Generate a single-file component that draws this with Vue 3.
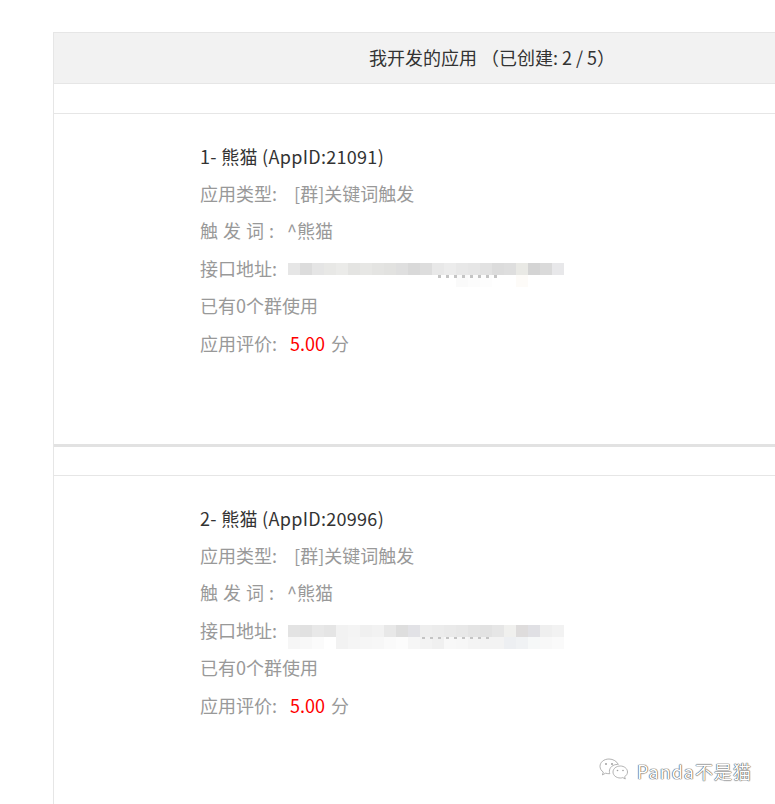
<script setup>
const top1 = ['#e6e6e6','#dcdcdc','#e5e5e5','#e8e8e6','#ebebe9','#e4e4e2','#e7e7e5','#e4e4e2','#e2e2e0','#dfdfdf','#d9d9d9','#dddddd','#e8e8e8','#ececec','#e8e8e8','#e6e6e6','#e2e2e2','#dcdcdc','#dedede','#e9e9e5','#d4d4d4','#dadada','#e8e8ea']
const bottom1 = ['#fff','#fff','#fff','#fff','#fff','#fff','#fff','#fff','#fff','#fff','#fff','#fff','#fff','#fff','#fafafa','#fcfcfc','#fdfdfd','#fff','#fff','#fdfbf8','#fff','#fff','#fff']
const top2 = ['#e3e3e3','#e1e1e1','#e8e8e8','#e5e5e5','#f2f2f2','#f4f4f4','#f0f0f0','#f2f2f2','#e8e8e8','#dedede','#e2e2e6','#eeeeee','#ececec','#eaeaea','#e8e8e8','#e4e4e4','#e2e2e2','#e6e6e6','#f0f0ee','#dedcdc','#e0e0e4','#efefef','#f2f2f2']
const bottom2 = ['#f6f6f6','#f8f8f8','#fbfbfb','#fff','#f2f2f2','#f5f5f5','#f6f6f6','#f7f7f7','#fafafa','#fcfcfc','#f6f6f6','#f3f3f3','#f0f0f0','#f8f8f8','#f7f7f7','#f4f4f4','#f3f3f3','#f3f3f3','#edeff2','#f0f2f4','#f6f8f8','#f8f8f8','#fafafa']

const apps = [
  { no: 1, id: 21091, top: top1, bottom: bottom1, smudge: 'smudge-a' },
  { no: 2, id: 20996, top: top2, bottom: bottom2, smudge: 'smudge-b' }
]
</script>

<template>
  <div class="page">
    <section class="panel">
      <header class="panel-head">我开发的应用 （已创建: 2 / 5）</header>
      <div class="spacer"></div>
      <article v-for="app in apps" :key="app.id" class="app">
        <div class="spacer second" v-if="app.no > 1"></div>
        <div class="app-body">
          <div class="row title">{{ app.no }}- 熊猫 (AppID:{{ app.id }})</div>
          <div class="row">应用类型: <span class="gap-l">[群]关键词触发</span></div>
          <div class="row"><span class="spaced">触发词</span>: <span class="gap-s">^熊猫</span></div>
          <div class="row addr">
            接口地址:
            <div class="mosaic">
              <div class="mosaic-row">
                <i v-for="(c, i) in app.top" :key="i" :style="{ background: c }"></i>
              </div>
              <div class="mosaic-row">
                <i v-for="(c, i) in app.bottom" :key="i" :style="{ background: c }"></i>
              </div>
              <div class="smudge" :class="app.smudge"></div>
            </div>
          </div>
          <div class="row">已有0个群使用</div>
          <div class="row">应用评价: <span class="score">5.00</span> 分</div>
        </div>
      </article>
    </section>

    <div class="watermark">
      <svg class="wx" width="32" height="28" viewBox="0 0 32 28" fill="#fff" stroke="#a0a0a0" stroke-width="0.8">
        <path d="M11 2C5.800 2 2 5.300 2 9.400c0 2.400 1.300 4.300 3.300 5.700l-.9 2.800 3.200-1.700c1.100.3 2.200.5 3.400.5h.8c-.3-.8-.4-1.600-.4-2.400 0-3.900 3.600-6.900 8.200-6.900h.7C18.900 4.500 15.300 2 11 2z" />
        <path d="M29.500 15c0-3.400-3.300-6-7.200-6s-7.300 2.600-7.300 6 3.300 6 7.300 6c.9 0 1.700-.1 2.500-.4l2.500 1.400-.7-2.300c1.800-1.100 2.900-2.800 2.900-4.700z" />
        <circle cx="8" cy="7" r="1" fill="#a0a0a0" stroke="none" />
        <circle cx="14" cy="7" r="1" fill="#a0a0a0" stroke="none" />
        <circle cx="19.500" cy="13.500" r=".8" fill="#a0a0a0" stroke="none" />
        <circle cx="25" cy="13.500" r=".8" fill="#a0a0a0" stroke="none" />
      </svg>
      <span class="wm-text">Panda不是猫</span>
    </div>
  </div>
</template>

<style>
html, body {
  overflow: hidden;
  background: #fff;
}
</style>

<style scoped>
.page {
  position: relative;
  width: 775px;
  height: 804px;
  overflow: hidden;
  padding: 32px 0 0 53px;
  box-sizing: border-box;
  background: #fff;
  font-family: "Noto Sans CJK SC", "Noto Sans", sans-serif;
  font-size: 18px;
  color: #999;
}
.panel {
  width: 876px;
  min-height: 800px;
  border-left: 1px solid #e6e6e6;
  border-top: 1px solid #e6e6e6;
}
.panel-head {
  height: 50px;
  line-height: 49px;
  text-align: center;
  background: #f2f2f2;
  border-bottom: 1px solid #e6e6e6;
  color: #333;
}
.spacer {
  height: 29px;
  border-bottom: 1px solid #e6e6e6;
}
.spacer.second {
  height: 28px;
}
.app:first-of-type .app-body {
  height: 333px;
  border-bottom: 3px solid #e2e2e2;
}
.app-body {
  height: 328px;
  box-sizing: border-box;
  padding: 23.6px 0 0 146px;
}
.row {
  height: 37.4px;
  line-height: 37.4px;
  white-space: nowrap;
}
.title {
  color: #333;
  letter-spacing: 0.3px;
}
.gap-l {
  margin-left: 13px;
}
.gap-s {
  margin-left: 9px;
}
.spaced {
  letter-spacing: 5px;
}
.score {
  color: #f00;
  margin: 0 2px 0 9px;
}
.addr {
  display: flex;
  align-items: flex-start;
}
.mosaic {
  position: relative;
  margin: 13.4px 0 0 11px;
  width: 276px;
}
.mosaic-row {
  display: flex;
  height: 12px;
}
.mosaic-row i {
  display: block;
  flex: 0 0 12px;
  height: 100%;
}
/* what is left of the address below the blur */
.smudge {
  position: absolute;
  top: 12px;
  height: 3px;
  background: repeating-linear-gradient(90deg, #c4c4c4 0 3px, transparent 3px 8px);
}
.smudge-a {
  left: 150px;
  width: 60px;
}
.smudge-b {
  left: 134px;
  width: 72px;
  height: 2px;
}
.watermark {
  position: absolute;
  left: 598px;
  top: 757px;
  display: flex;
  align-items: center;
  gap: 7px;
}
.wm-text {
  font-size: 18px;
  letter-spacing: 1px;
  color: #fff;
  text-shadow: 0 0 1px #555, 0 0 1px #555, 0 0 1px #555;
}
</style>
